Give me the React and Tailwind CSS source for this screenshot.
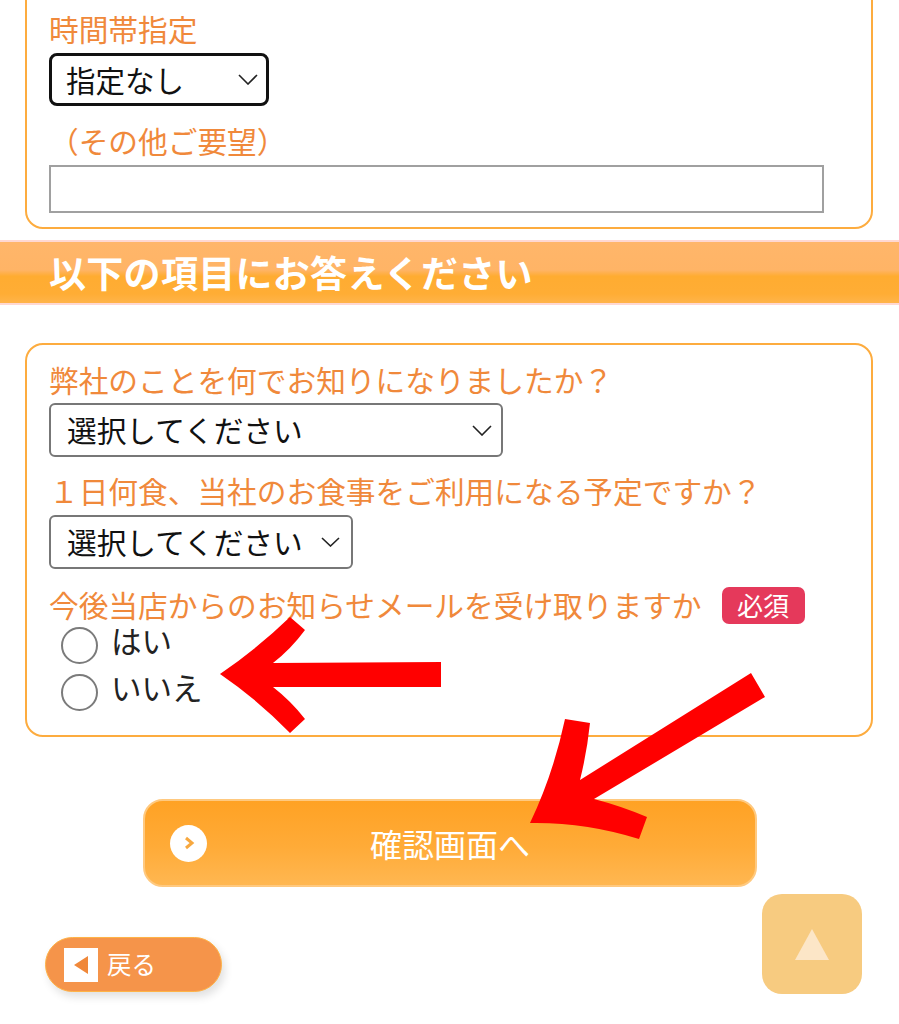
const Label = ({ children, className = "" }) => (
  <p className={`text-[29.7px] leading-[36px] text-[#f0893b] whitespace-nowrap ${className}`}>
    {children}
  </p>
);

const Chevron = ({ w = 20, h = 11 }) => (
  <svg width={w} height={h} viewBox={`0 0 ${w} ${h}`} className="shrink-0">
    <polyline
      points={`1,1 ${w / 2},${h - 1} ${w - 1},1`}
      fill="none"
      stroke="#222"
      strokeWidth="1.6"
    />
  </svg>
);

const Radio = ({ label }) => (
  <div className="flex h-[47px] items-start">
    <span className="ml-[12px] mt-[4px] h-[37px] w-[37px] shrink-0 rounded-full border-2 border-[#7b7b7b] bg-white" />
    <span className="ml-[13px] mt-[2px] text-[30.5px] leading-[30px] text-[#222]">{label}</span>
  </div>
);

const Arrows = () => (
  <svg
    width="899"
    height="1024"
    viewBox="0 0 899 1024"
    className="pointer-events-none absolute left-0 top-0"
  >
    {/* left-pointing arrow next to the radios */}
    <path
      d="M220,674 Q258,648 290,617 L305,630 Q291,649 273,663 L441,662 L441,687 L273,687 Q291,701 305,719 L290,733 Q258,700 220,674 Z"
      fill="#ff0000"
    />
    {/* diagonal arrow onto the confirm button */}
    <path
      d="M751,673 L765,697 L594,799 Q621,806 647,817 L639,839 Q585,822 530,823 Q553,775 565,719 L590,723 Q587,752 580,780 Z"
      fill="#ff0000"
    />
  </svg>
);

export default function App() {
  return (
    <div className="relative h-[1024px] w-[899px] overflow-hidden bg-white font-['Noto_Sans_CJK_JP','Noto_Sans',sans-serif]">
      {/* delivery time box (top cut off) */}
      <section className="-mt-[20px] ml-[25px] w-[848px] rounded-[18px] border-2 border-[#fdac3f] pb-[14px] pl-[22px] pt-[29px]">
        <Label>時間帯指定</Label>
        <div className="mt-[6px] flex h-[53px] w-[220px] items-center justify-between rounded-[8px] border-[3.5px] border-[#111] pl-[14px] pr-[8px]">
          <span className="text-[29.5px] leading-none text-[#111]">指定なし</span>
          <Chevron />
        </div>
        <Label className="mt-[17px]">（その他ご要望）</Label>
        <div className="mt-[6px] h-[48px] w-[775px] border-2 border-[#a0a0a0] bg-white" />
      </section>

      {/* section heading band */}
      <div className="mt-[11px] flex h-[65px] items-center border-y-2 border-[#ffd8d2] bg-[linear-gradient(to_bottom,#ffb66a_0%,#ffb466_46%,#ffac31_56%,#ffad35_85%,#ffb44a_100%)] pl-[49px]">
        <h2 className="text-[37px] font-bold leading-none tracking-[0.3px] text-white">
          以下の項目にお答えください
        </h2>
      </div>

      {/* questionnaire box */}
      <section className="ml-[25px] mt-[38px] w-[848px] rounded-[18px] border-2 border-[#fdac3f] pb-[18px] pl-[22px] pt-[17px]">
        <Label>弊社のことを何でお知りになりましたか？</Label>
        <div className="mt-[5px] flex h-[54px] w-[454px] items-center justify-between rounded-[6px] border-2 border-[#777] pl-[16px] pr-[9px]">
          <span className="text-[29.7px] leading-none text-[#111]">選択してください</span>
          <Chevron />
        </div>
        <Label className="mt-[16px]">１日何食、当社のお食事をご利用になる予定ですか？</Label>
        <div className="mt-[6px] flex h-[54px] w-[304px] items-center justify-between rounded-[6px] border-2 border-[#777] pl-[16px] pr-[11px]">
          <span className="text-[29.7px] leading-none text-[#111]">選択してください</span>
          <Chevron w={19} h={10} />
        </div>
        <div className="mt-[18px] flex h-[36px] items-center">
          <Label>今後当店からのお知らせメールを受け取りますか</Label>
          <span className="ml-[20px] flex h-[37px] w-[83px] items-center justify-center rounded-[7px] bg-[#e5395b] text-[26px] leading-none text-white">
            必須
          </span>
        </div>
        <Radio label="はい" />
        <Radio label="いいえ" />
      </section>

      {/* confirm button */}
      <button className="ml-[143px] mt-[62px] grid h-[88px] w-[614px] grid-cols-[1fr_auto_1fr] items-center rounded-[20px] border-2 border-[#ffc97f] bg-[linear-gradient(to_bottom,#ffa224_0%,#ffab38_55%,#ffb751_100%)]">
        <span className="ml-[25px] flex h-[37px] w-[37px] items-center justify-center rounded-full bg-white">
          <svg width="12" height="14" viewBox="0 0 12 14">
            <polyline points="3,2 9,7 3,12" fill="none" stroke="#f7a83f" strokeWidth="3" />
          </svg>
        </span>
        <span className="text-[32px] leading-none text-white">確認画面へ</span>
        <span />
      </button>

      {/* back button */}
      <button className="ml-[45px] mt-[50px] flex h-[55px] w-[177px] items-center rounded-full border-[1.5px] border-[#ffb347] bg-[#f5944a] pl-[18px] shadow-[3px_5px_8px_rgba(0,0,0,0.12)]">
        <span className="flex h-[34px] w-[34px] items-center justify-center bg-white">
          <svg width="15" height="18" viewBox="0 0 15 18">
            <polygon points="0,9 14,0 14,18" fill="#f0883a" />
          </svg>
        </span>
        <span className="ml-[9px] text-[24.5px] leading-none text-white">戻る</span>
      </button>

      {/* floating page-top button */}
      <div className="absolute bottom-[30px] right-[37px] flex h-[100px] w-[100px] items-center justify-center rounded-[20px] bg-[#f7cb80]">
        <svg width="34" height="31" viewBox="0 0 34 31">
          <polygon points="17,0 34,31 0,31" fill="#fce6c7" />
        </svg>
      </div>

      <Arrows />
    </div>
  );
}
